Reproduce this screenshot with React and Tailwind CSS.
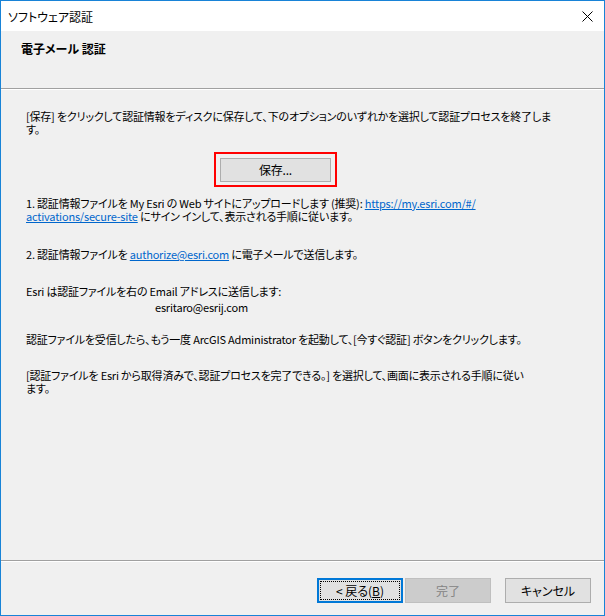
import React from "react";

const font = {
  fontFamily: '"Noto Sans CJK JP", "Noto Sans", sans-serif',
  fontFeatureSettings: '"palt"',
};

function Link({ children }) {
  return <span className="text-[#0066cc] underline underline-offset-1">{children}</span>;
}

export default function App() {
  return (
    <div
      style={font}
      className="w-[605px] h-[616px] border border-[#1883d7] bg-[#f0f0f0] flex flex-col text-[12px] leading-[13px] text-black overflow-hidden"
    >
      {/* Title bar */}
      <div className="h-[30px] bg-white flex items-center justify-between pl-[7px] pr-[10px] shrink-0">
        <span className="text-[12px]">ソフトウェア認証</span>
        <svg width="11" height="11" viewBox="0 0 11 11" className="mr-[1px]">
          <path d="M0.5 0.5 L10.5 10.5 M10.5 0.5 L0.5 10.5" stroke="#000" strokeWidth="1" />
        </svg>
      </div>

      {/* Header */}
      <div className="h-[57px] shrink-0 pl-[20px] pt-[11px]">
        <h1 className="font-bold text-[12px] leading-[13px]">電子メール 認証</h1>
      </div>
      <div className="h-px bg-[#a0a0a0] shrink-0" />
      <div className="h-px bg-white shrink-0" />

      {/* Body */}
      <div className="flex-1 pl-[25px] pt-[20px] text-[11px] tracking-[-0.2px]">
        <p className="whitespace-nowrap">
          [保存] をクリックして認証情報をディスクに保存して、下のオプションのいずれかを選択して認証プロセスを終了しま
          <br />す。
        </p>

        <div className="mt-[16px] ml-[188px] w-[123px] h-[35px] border-2 border-[#ff0000] flex items-center justify-center">
          <button
            type="button"
            className="w-[111px] h-[24px] bg-[#e1e1e1] border border-[#adadad] flex items-center justify-center text-[12px]"
          >
            保存...
          </button>
        </div>

        <p className="mt-[10px] whitespace-nowrap">
          1. 認証情報ファイルを My Esri の Web サイトにアップロードします (推奨):{" "}
          <Link>https://my.esri.com/#/</Link>
          <br />
          <Link>activations/secure-site</Link> にサイン インして、表示される手順に従います。
        </p>

        <p className="mt-[25px] whitespace-nowrap">
          2. 認証情報ファイルを <Link>authorize@esri.com</Link> に電子メールで送信します。
        </p>

        <p className="mt-[24px] whitespace-nowrap">Esri は認証ファイルを右の Email アドレスに送信します:</p>
        <p className="mt-[3px] ml-[129px]">esritaro@esrij.com</p>

        <p className="mt-[19px] whitespace-nowrap">
          認証ファイルを受信したら、もう一度 ArcGIS Administrator を起動して、[今すぐ認証] ボタンをクリックします。
        </p>

        <p className="mt-[23px] whitespace-nowrap">
          [認証ファイルを Esri から取得済みで、認証プロセスを完了できる。] を選択して、画面に表示される手順に従い
          <br />ます。
        </p>
      </div>

      {/* Footer */}
      <div className="h-px bg-[#a0a0a0] shrink-0" />
      <div className="h-px bg-white shrink-0" />
      <div className="h-[53px] shrink-0 flex items-start pt-[16px] pl-[316px]">
        <button
          type="button"
          className="relative w-[86px] h-[25px] bg-[#e1e1e1] border-2 border-[#0078d7] flex items-center justify-center text-[12px]"
        >
          <span className="absolute inset-[1px] border border-dotted border-black" />
          <span className="relative">
            &lt; 戻る(<span className="underline">B</span>)
          </span>
        </button>
        <button
          type="button"
          disabled
          className="ml-[2px] w-[86px] h-[25px] bg-[#cccccc] border border-[#bfbfbf] text-[#838383] flex items-center justify-center text-[12px]"
        >
          完了
        </button>
        <button
          type="button"
          className="ml-[14px] w-[86px] h-[25px] bg-[#e1e1e1] border border-[#adadad] flex items-center justify-center text-[12px]"
        >
          キャンセル
        </button>
      </div>
    </div>
  );
}
